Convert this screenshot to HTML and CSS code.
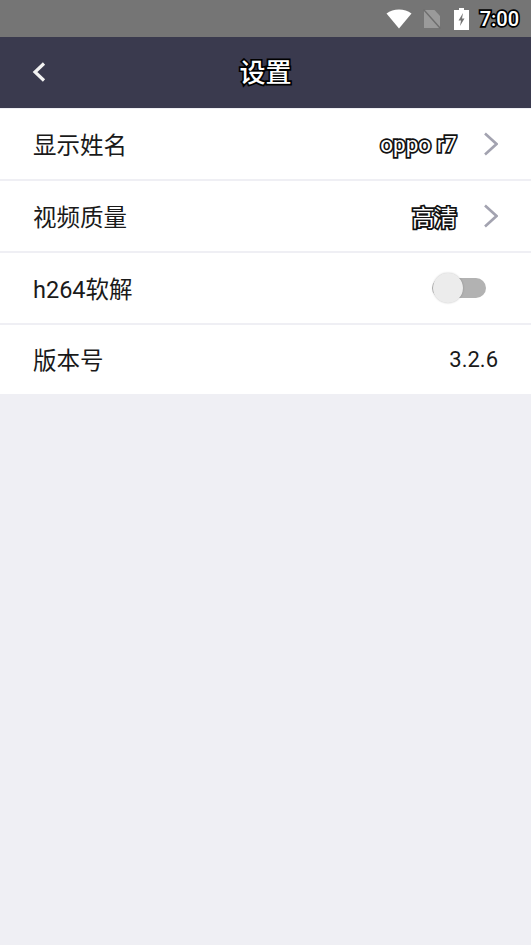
FILE: index.html
```html
<!DOCTYPE html>
<html lang="zh">
<head>
<meta charset="utf-8">
<title>设置</title>
<link rel="stylesheet" href="styles.css">
</head>
<body>
<div class="status">
  <svg class="wifi" width="26" height="20" viewBox="0 0 26 20"><path d="M0.500 4.500C4 1.700 8.300 0.500 13 0.500S22 1.700 25.500 4.500L13 19.500Z" fill="#fff"/></svg>
  <svg class="sim" width="18" height="20" viewBox="0 0 18 20"><path d="M1 1H11.500L17 7V19H1Z" fill="#9a9a9a"/><path d="M0.500 0.500L17.500 19.500" stroke="#6e6e6e" stroke-width="1.500"/></svg>
  <svg class="batt" width="15" height="22" viewBox="0 0 15 22"><path d="M5 0H10V2H15V22H0V2H5Z" fill="#fff"/><path d="M9 5L4.500 12.500H7L6 18L10.500 10.500H8Z" fill="#757575"/></svg>
  <span class="time">7:00</span>
</div>
<header class="nav">
  <svg class="back" width="16" height="22" viewBox="0 0 16 22"><path d="M13 2.500L4 11L13 19.500" fill="none" stroke="#f2f2f2" stroke-width="3.200"/></svg>
  <h1 class="title">设置</h1>
</header>
<main class="list">
  <div class="row">
    <span class="label">显示姓名</span>
    <span class="right"><span class="value outlined">oppo r7</span><svg class="chev" width="16" height="24" viewBox="0 0 16 24"><path d="M3 1.500L14.500 12L3 22.500" fill="none" stroke="#a3a3b0" stroke-width="2.600"/></svg></span>
  </div>
  <div class="row">
    <span class="label">视频质量</span>
    <span class="right"><span class="value outlined">高清</span><svg class="chev" width="16" height="24" viewBox="0 0 16 24"><path d="M3 1.500L14.500 12L3 22.500" fill="none" stroke="#a3a3b0" stroke-width="2.600"/></svg></span>
  </div>
  <div class="row">
    <span class="label">h264软解</span>
    <span class="switch"><span class="knob"></span></span>
  </div>
  <div class="row last">
    <span class="label">版本号</span>
    <span class="version">3.2.6</span>
  </div>
</main>
</body>
</html>
```
FILE: styles.css
```css
* { box-sizing: border-box; }
html, body { margin: 0; height: 100%; }
body {
  background: #efeff4;
  font-family: Roboto, "Noto Sans CJK SC", sans-serif;
  color: #1a1a1a;
  overflow: hidden;
}
.status {
  height: 37px;
  background: #757575;
  display: flex;
  align-items: center;
  justify-content: flex-end;
  padding: 0 12px 0 0;
}
.wifi { margin-right: 11px; }
.sim { margin-right: 13px; }
.batt { margin-right: 11px; }
.time {
  font-size: 20px;
  font-weight: 500;
  color: #fff;
  -webkit-text-stroke: 3.400px #000;
  paint-order: stroke fill;
}
.nav {
  height: 71px;
  padding-bottom: 4px;
  background: #3a3a4e;
  display: flex;
  align-items: center;
  justify-content: center;
  position: relative;
}
.back { position: absolute; left: 31px; top: 24px; }
.title {
  margin: 0;
  font-size: 26px;
  font-weight: 500;
  color: #fff;
  -webkit-text-stroke: 3.400px #000;
  paint-order: stroke fill;
}
.list { background: #fff; border-top: 1px solid #efeff4; }
.row {
  height: 72px;
  display: flex;
  align-items: center;
  justify-content: space-between;
  padding: 0 33px;
  border-bottom: 2px solid #efeff4;
}
.row.last { height: 69px; border-bottom: 0; }
.label { font-size: 23.500px; margin-bottom: 1px; }
.right { display: flex; align-items: center; }
.value {
  font-size: 22.500px;
  margin-right: 25px;
  margin-bottom: 1px;
}
.outlined {
  color: #fff;
  -webkit-text-stroke: 3.400px #111;
  paint-order: stroke fill;
}
.chev { display: block; }
.version { font-size: 22px; }
.switch {
  width: 54px;
  height: 20px;
  margin-right: 12px;
  background: #b2b2b2;
  border-radius: 10px;
  position: relative;
}
.knob {
  position: absolute;
  left: 1px;
  top: -5px;
  width: 30px;
  height: 30px;
  border-radius: 50%;
  background: #ececec;
  box-shadow: 0 0 2px rgba(0,0,0,.25);
}
```
